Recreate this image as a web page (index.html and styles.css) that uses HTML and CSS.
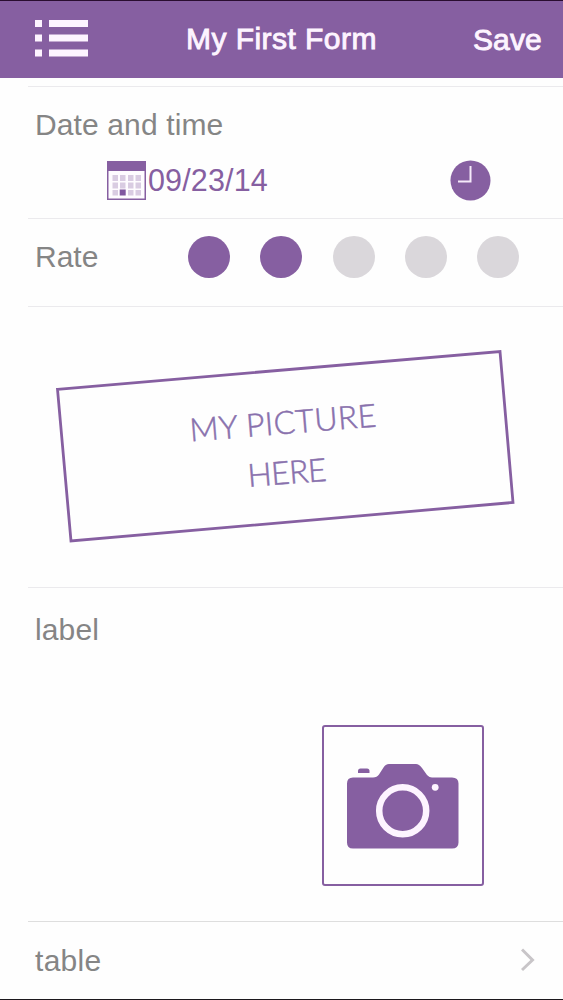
FILE: index.html
```html
<!DOCTYPE html>
<html lang="en">
<head>
<meta charset="utf-8">
<title>My First Form</title>
<link rel="stylesheet" href="styles.css">
</head>
<body>
<div class="screen">
  <header class="bar">
    <svg class="menu" width="54" height="40" viewBox="0 0 54 40" fill="#fdf4ff">
      <rect x="0" y="1" width="7" height="7"/><rect x="14" y="1" width="39" height="7"/>
      <rect x="0" y="15.500" width="7" height="7"/><rect x="14" y="15.500" width="39" height="7"/>
      <rect x="0" y="30.500" width="7" height="7"/><rect x="14" y="30.500" width="39" height="7"/>
    </svg>
    <h1 class="title">My First Form</h1>
    <span class="save">Save</span>
  </header>
  <main class="form">
    <section class="row datetime">
      <div class="name">Date and time</div>
      <div class="values">
        <svg class="calendar" width="39" height="39" viewBox="0 0 39 39">
          <rect x=".75" y=".75" width="37.500" height="37.500" fill="#fefcff" stroke="#865fa1" stroke-width="1.500"/>
          <rect width="39" height="10" fill="#865fa1"/>
          <g fill="#d9cce2">
            <rect x="5.500" y="14" width="5.500" height="6"/><rect x="13" y="14" width="5.500" height="6"/><rect x="21" y="14" width="5.500" height="6"/><rect x="28.500" y="14" width="5.500" height="6"/>
            <rect x="5.500" y="21.500" width="5.500" height="6"/><rect x="13" y="21.500" width="5.500" height="6"/><rect x="21" y="21.500" width="5.500" height="6"/><rect x="28.500" y="21.500" width="5.500" height="6"/>
            <rect x="5.500" y="29" width="5.500" height="5.500"/><rect x="21" y="29" width="5.500" height="5.500"/><rect x="28.500" y="29" width="5.500" height="5.500"/>
          </g>
          <rect x="12.700" y="28.500" width="6" height="6" fill="#8057a0"/>
        </svg>
        <span class="date">09/23/14</span>
        <svg class="clock" width="41" height="41" viewBox="0 0 41 41">
          <circle cx="20.500" cy="20.500" r="20" fill="#865fa1"/>
          <path d="M20.500 6V21.500H8" fill="none" stroke="#f5eafa" stroke-width="2"/>
        </svg>
      </div>
    </section>
    <section class="row rate">
      <div class="name">Rate</div>
      <div class="dots">
        <i class="dot on"></i><i class="dot on"></i><i class="dot"></i><i class="dot"></i><i class="dot"></i>
      </div>
    </section>
    <section class="row picture">
      <svg width="535" height="280" viewBox="28 307 535 280">
        <path d="M57.500 389.300L500 351.500L513 502.500L71 541Z" fill="none" stroke="#865fa1" stroke-width="2.800"/>
        <g class="caption">
          <text transform="translate(190.500 441.500) rotate(-4.600)" textLength="187">MY PICTURE</text>
          <text transform="translate(248.500 487) rotate(-4.600)" textLength="79">HERE</text>
        </g>
      </svg>
    </section>
    <section class="row photo">
      <div class="name">label</div>
      <div class="camera">
        <svg width="112" height="86" viewBox="0 0 112 86">
          <path fill="#865fa1" d="M6 13.500H26Q30 13.500 32 10.500L36.500 3.500Q38.500 0 42 0H69Q72 0 75 4L80 11Q82.500 13.500 85 13.500H105Q111.500 13.500 111.500 19.500V78.500Q111.500 84.500 105 84.500H6Q0 84.500 0 78.500V19.500Q0 13.500 6 13.500Z"/>
          <path fill="#865fa1" d="M11 9V7Q11 4.500 13.500 4.500H20Q22.500 4.500 22.500 7V9Z"/>
          <circle cx="55.700" cy="46.800" r="23.500" fill="none" stroke="#fdf4ff" stroke-width="6.500"/>
          <circle cx="88.200" cy="23.300" r="3.400" fill="#fdf4ff"/>
        </svg>
      </div>
    </section>
    <section class="row table">
      <div class="name">table</div>
      <svg class="chevron" width="14" height="24" viewBox="0 0 14 24">
        <path d="M1 1.500L11.500 12L1 22" fill="none" stroke="#c8c5c8" stroke-width="3"/>
      </svg>
    </section>
  </main>
</div>
</body>
</html>
```
FILE: styles.css
```css
* { box-sizing: border-box; }
body {
  margin: 0;
  background: #fefefe;
  font-family: "Liberation Sans", Arial, sans-serif;
  font-size: 30px;
  line-height: 34px;
}
svg { display: block; flex: none; }
.screen {
  width: 563px;
  height: 1000px;
  display: flex;
  flex-direction: column;
  border-bottom: 1px solid #1c181d;
  overflow: hidden;
}
.bar {
  flex: none;
  height: 78px;
  display: grid;
  grid-template-columns: 150px 1fr 131px;
  background: #865fa1;
  border-top: 1px solid #2a0d30;
  color: #fdf4ff;
}
.menu { margin: 18px 0 0 35px; }
.title, .save {
  font-size: 30px;
  font-weight: 400;
  line-height: 34px;
  -webkit-text-stroke: 0.9px currentColor;
}
.title {
  margin: 21px 0 0 36px;
  letter-spacing: 0.45px;
  white-space: nowrap;
}
.save { margin: 22px 0 0 41px; letter-spacing: 0.1px; }
.form { padding: 8px 0 0 28px; }
.row { border-top: 1px solid #ebeaed; display: flex; }
.name { margin-left: 7px; color: #858585; letter-spacing: 0.12px; }
.datetime { height: 132px; flex-direction: column; }
.datetime .name { margin-top: 21px; }
.values { display: flex; padding: 18px 0 0 79px; }
.calendar { margin-top: 1px; }
.date {
  width: 304px;
  padding: 3px 0 0 2px;
  color: #865fa1;
  font-size: 30.500px;
  letter-spacing: 0.15px;
}
.rate { height: 88px; }
.rate .name { margin-top: 21px; width: 153px; letter-spacing: 0; }
.dots { display: flex; gap: 30.250px; padding-top: 17px; }
.dot { width: 42px; height: 42px; border-radius: 50%; background: #dad7db; }
.on { background: #865fa1; }
.picture { height: 281px; }
.caption {
  font-family: Lato, sans-serif;
  font-size: 32px;
  font-weight: 300;
  fill: #8971ad;
  stroke: #8971ad;
  stroke-width: 0.5px;
}
.photo { height: 334px; flex-direction: column; }
.photo .name { margin-top: 25px; }
.camera {
  width: 162px;
  height: 161px;
  margin: 78px 0 0 294px;
  padding: 37px 0 0 23px;
  border: 2px solid #865fa1;
  border-radius: 3px;
}
.table { height: 78px; border-top: 1px solid #dedede; justify-content: space-between; }
.table .name { margin-top: 22px; letter-spacing: 0.3px; }
.chevron { margin: 26px 28px 0 0; }
```
